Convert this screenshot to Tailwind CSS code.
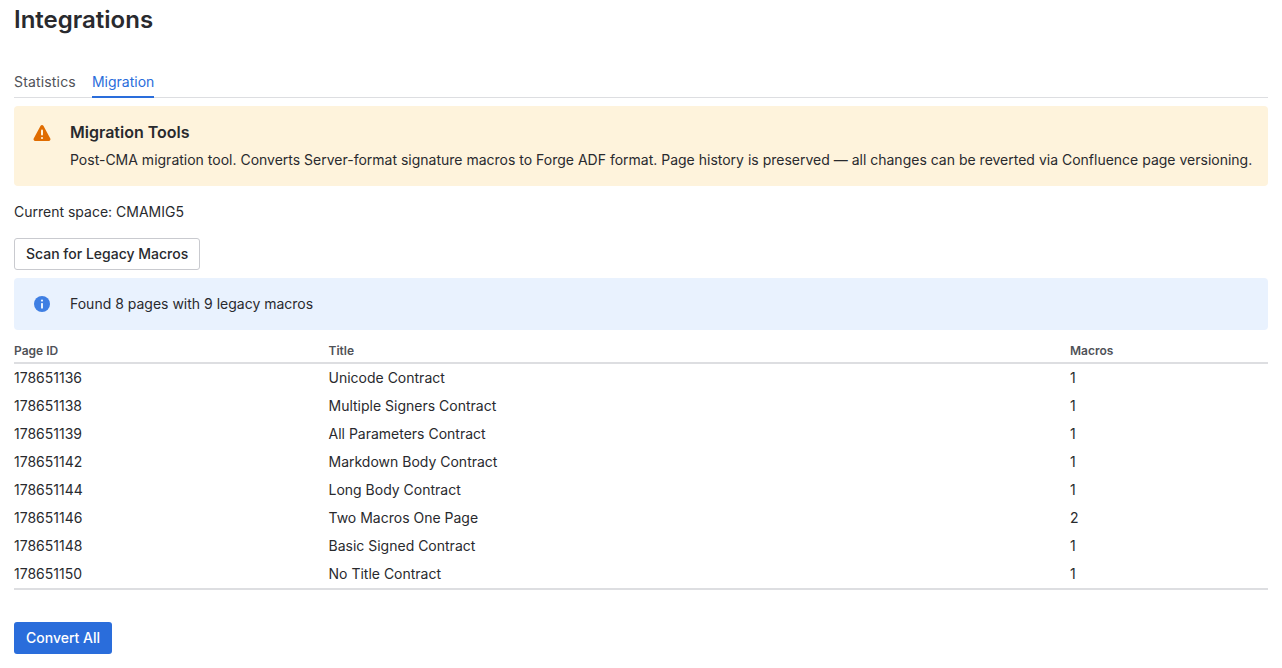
<!DOCTYPE html>
<html lang="en">
<head>
    <meta charset="UTF-8">
    <title>Integrations</title>
    <script src="https://cdn.jsdelivr.net/npm/@tailwindcss/browser@4"></script>
</head>
<body class="bg-white text-[#292a2e] text-sm font-['Inter',sans-serif] leading-5">
    <div class="px-[14px]">
        <h1 class="text-2xl leading-7 font-semibold pt-[6px] h-[64px]">Integrations</h1>

        <div class="flex gap-4 border-b border-[#dddee1] h-[34px]">
            <div class="h-[34px] pt-[8px] text-[#505258] tracking-[0.012em]">Statistics</div>
            <div class="h-[34px] pt-[8px] text-[#2a6ddb] border-b-2 border-[#2a6ddb]">Migration</div>
        </div>

        <div class="mt-2 h-20 rounded bg-[#fef3dc] flex gap-4 pl-4 pr-2 py-4">
            <svg class="w-6 h-6 shrink-0 -mt-[1px]" viewBox="0 0 24 24">
                <path fill="#e06c00" d="M10.6 4.8c.6-1.1 2.2-1.1 2.8 0l6.9 12.7c.6 1.1-.2 2.4-1.4 2.4H5.1c-1.2 0-2-1.3-1.4-2.4z"/>
                <rect x="11" y="8.5" width="2" height="6" rx="1" fill="#fef3dc"/>
                <circle cx="12" cy="17" r="1.1" fill="#fef3dc"/>
            </svg>
            <div>
                <div class="text-base leading-5 font-semibold">Migration Tools</div>
                <p class="mt-2">Post-CMA migration tool. Converts Server-format signature macros to Forge ADF format. Page history is preserved — all changes can be reverted via Confluence page versioning.</p>
            </div>
        </div>

        <p class="mt-4">Current space: CMAMIG5</p>

        <button class="mt-4 h-8 px-[11px] border border-[#c9cacf] rounded-[3px] bg-white font-medium block">Scan for Legacy Macros</button>

        <div class="mt-2 h-[52px] rounded bg-[#e9f2fe] flex items-center gap-4 px-4">
            <svg class="w-6 h-6 shrink-0" viewBox="0 0 24 24">
                <circle cx="12" cy="12" r="8" fill="#3f7fe3"/>
                <circle cx="12" cy="8.6" r="1.1" fill="#e9f2fe"/>
                <rect x="11" y="11" width="2" height="5.6" rx="0.6" fill="#e9f2fe"/>
            </svg>
            <span>Found 8 pages with 9 legacy macros</span>
        </div>

        <table class="mt-2 w-full table-fixed border-b-2 border-[#dddee1]">
            <thead>
                <tr class="border-b-2 border-[#dddee1] text-left text-xs text-[#505258]">
                    <th class="w-[314.5px] h-[25px] pt-[1px] font-semibold">Page ID</th>
                    <th class="h-[25px] pt-[1px] font-semibold">Title</th>
                    <th class="w-[198px] h-[25px] pt-[1px] font-semibold">Macros</th>
                </tr>
            </thead>
            <tbody>
                <tr class="h-7"><td class="pt-[1px]">178651136</td><td class="pt-[1px]">Unicode Contract</td><td class="pt-[1px]">1</td></tr>
                <tr class="h-7"><td class="pt-[1px]">178651138</td><td class="pt-[1px]">Multiple Signers Contract</td><td class="pt-[1px]">1</td></tr>
                <tr class="h-7"><td class="pt-[1px]">178651139</td><td class="pt-[1px]">All Parameters Contract</td><td class="pt-[1px]">1</td></tr>
                <tr class="h-7"><td class="pt-[1px]">178651142</td><td class="pt-[1px]">Markdown Body Contract</td><td class="pt-[1px]">1</td></tr>
                <tr class="h-7"><td class="pt-[1px]">178651144</td><td class="pt-[1px]">Long Body Contract</td><td class="pt-[1px]">1</td></tr>
                <tr class="h-7"><td class="pt-[1px]">178651146</td><td class="pt-[1px]">Two Macros One Page</td><td class="pt-[1px]">2</td></tr>
                <tr class="h-7"><td class="pt-[1px]">178651148</td><td class="pt-[1px]">Basic Signed Contract</td><td class="pt-[1px]">1</td></tr>
                <tr class="h-[30px]"><td class="pt-[1px]">178651150</td><td class="pt-[1px]">No Title Contract</td><td class="pt-[1px]">1</td></tr>
            </tbody>
        </table>

        <button class="mt-8 h-8 px-3 rounded-[3px] bg-[#2a6ddb] text-white font-medium block">Convert All</button>
    </div>
</body>
</html>
